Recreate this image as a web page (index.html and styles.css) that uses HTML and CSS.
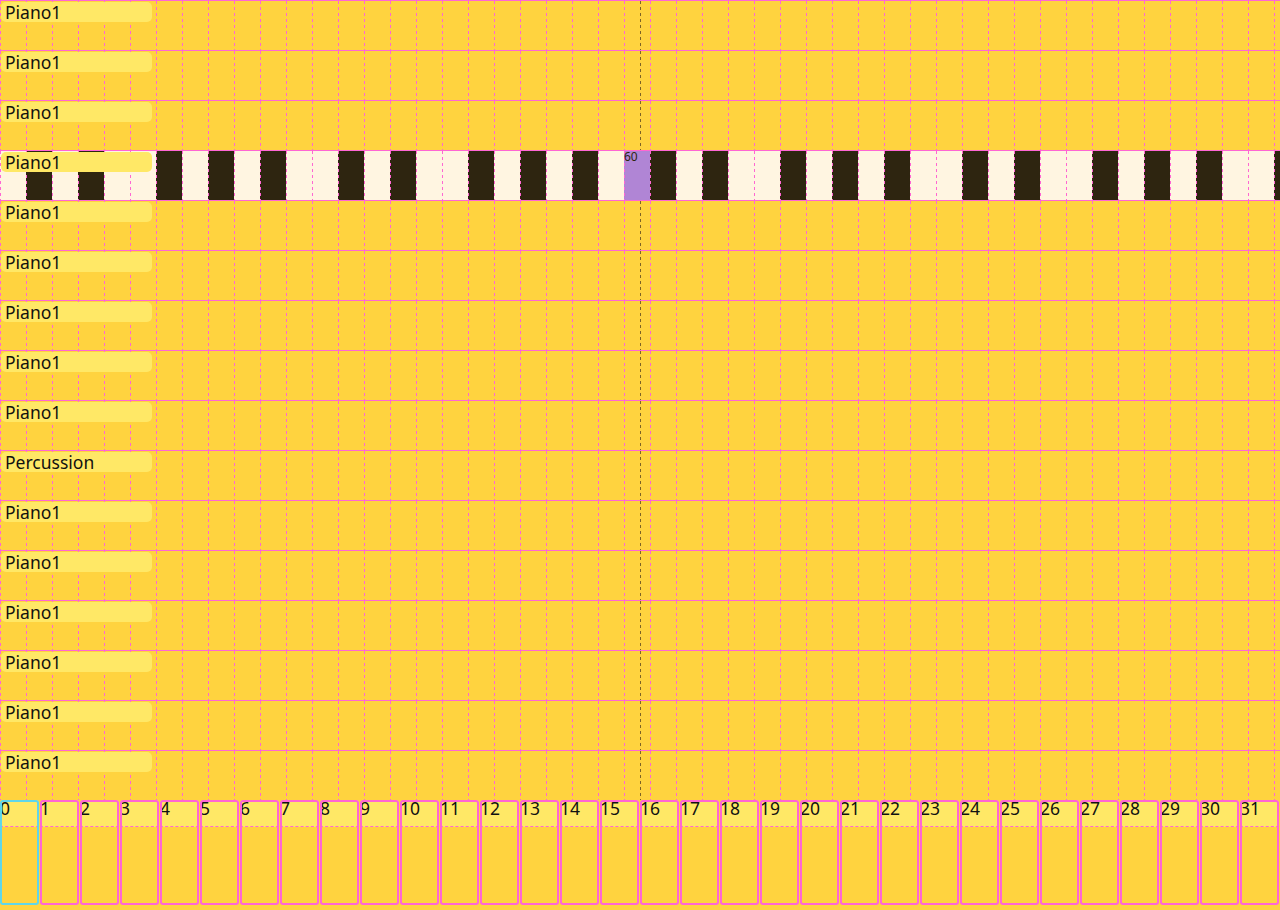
FILE: index.html
```html
<!DOCTYPE html>
<html lang="en">
<head>
  <meta charset="UTF-8" />
  <title>Tracks</title>
  <link rel="stylesheet" href="styles.css">
</head>
<body>
  <div class="tracks" id="tracks"></div>
  <div class="bars" id="bars"></div>

  <script>
    const names = [
      "Piano1", "Piano1", "Piano1", "Piano1", "Piano1", "Piano1", "Piano1", "Piano1",
      "Piano1", "Percussion", "Piano1", "Piano1", "Piano1", "Piano1", "Piano1", "Piano1"
    ];
    const openTrack = 3;
    const lowNote = 36;
    const blackSteps = [1, 3, 6, 8, 10];

    const tracks = document.getElementById("tracks");
    names.forEach((name, i) => {
      const row = document.createElement("div");
      row.className = "track";

      if (i === openTrack) {
        row.classList.add("open");
        const keys = document.createElement("div");
        keys.className = "keys";
        for (let n = lowNote; n < lowNote + 50; n++) {
          const key = document.createElement("div");
          key.className = "key";
          if (blackSteps.includes(n % 12)) key.classList.add("black");
          if (n === 60) {
            key.classList.add("active");
            key.textContent = n;
          }
          keys.appendChild(key);
        }
        row.appendChild(keys);
      }

      const label = document.createElement("div");
      label.className = "label";
      label.textContent = name;
      row.appendChild(label);
      tracks.appendChild(row);
    });

    const bars = document.getElementById("bars");
    for (let b = 0; b < 32; b++) {
      const bar = document.createElement("div");
      bar.className = "bar" + (b === 0 ? " current" : "");
      const head = document.createElement("div");
      head.className = "bar-head";
      head.textContent = b;
      bar.appendChild(head);
      bars.appendChild(bar);
    }
  </script>
</body>
</html>
```

FILE: styles.css
```css
body {
  margin: 0;
  height: 910px;
  overflow: hidden;
  background: #ffd33f;
  font-family: "Noto Sans", sans-serif;
  color: #111;
}

/* track rows */
.track {
  display: grid;
  height: 50px;
  box-sizing: border-box;
  border-top: 1px solid #ff66d4;
  overflow: hidden;
  background-color: #ffd33f;
  background-image:
    repeating-linear-gradient(to bottom, transparent 0 3px, #ffd33f 3px 6px),
    linear-gradient(#7d6128, #7d6128),
    linear-gradient(to right, #ff66d4 1px, transparent 1px);
  background-size: 100% 100%, 1px 100%, 26px 100%;
  background-position: 0 0, 640px 0, 0 0;
  background-repeat: no-repeat, no-repeat, repeat-x;
}
.label {
  grid-area: 1 / 1;
  align-self: start;
  justify-self: start;
  z-index: 1;
  width: 151px;
  height: 20px;
  margin: 1px 0 0 1px;
  padding-left: 4px;
  box-sizing: border-box;
  background: #ffe866;
  border-radius: 5px;
  font-size: 17.5px;
  line-height: 20px;
  white-space: nowrap;
}

/* piano keys of the open track */
.keys {
  grid-area: 1 / 1;
  display: flex;
}
.key {
  flex: 0 0 26px;
  height: 49px;
  background: repeating-linear-gradient(to bottom, #ff66d4 0 3px, transparent 3px 6px) 0 0 / 1px 100% no-repeat, #fff5e1;
  font-size: 12px;
  line-height: 11px;
  color: #2e2510;
}
.key.black {
  background-color: #2e2510;
}
.key.active {
  background-color: #b085d5;
}

/* bar cells */
.bars {
  display: flex;
}
.bar {
  flex: 0 0 39px;
  height: 105px;
  margin-right: 1px;
  box-sizing: border-box;
  border-radius: 3px;
  outline: 2px solid #ff66d4;
  outline-offset: -2px;
}
.bar.current {
  outline-color: #5fd6ea;
}
.bar-head {
  height: 26px;
  background: #ffe866;
  border-bottom: 1px dashed #ff66d4;
  border-radius: 3px 3px 0 0;
  font-size: 17.5px;
  line-height: 16px;
}
```
